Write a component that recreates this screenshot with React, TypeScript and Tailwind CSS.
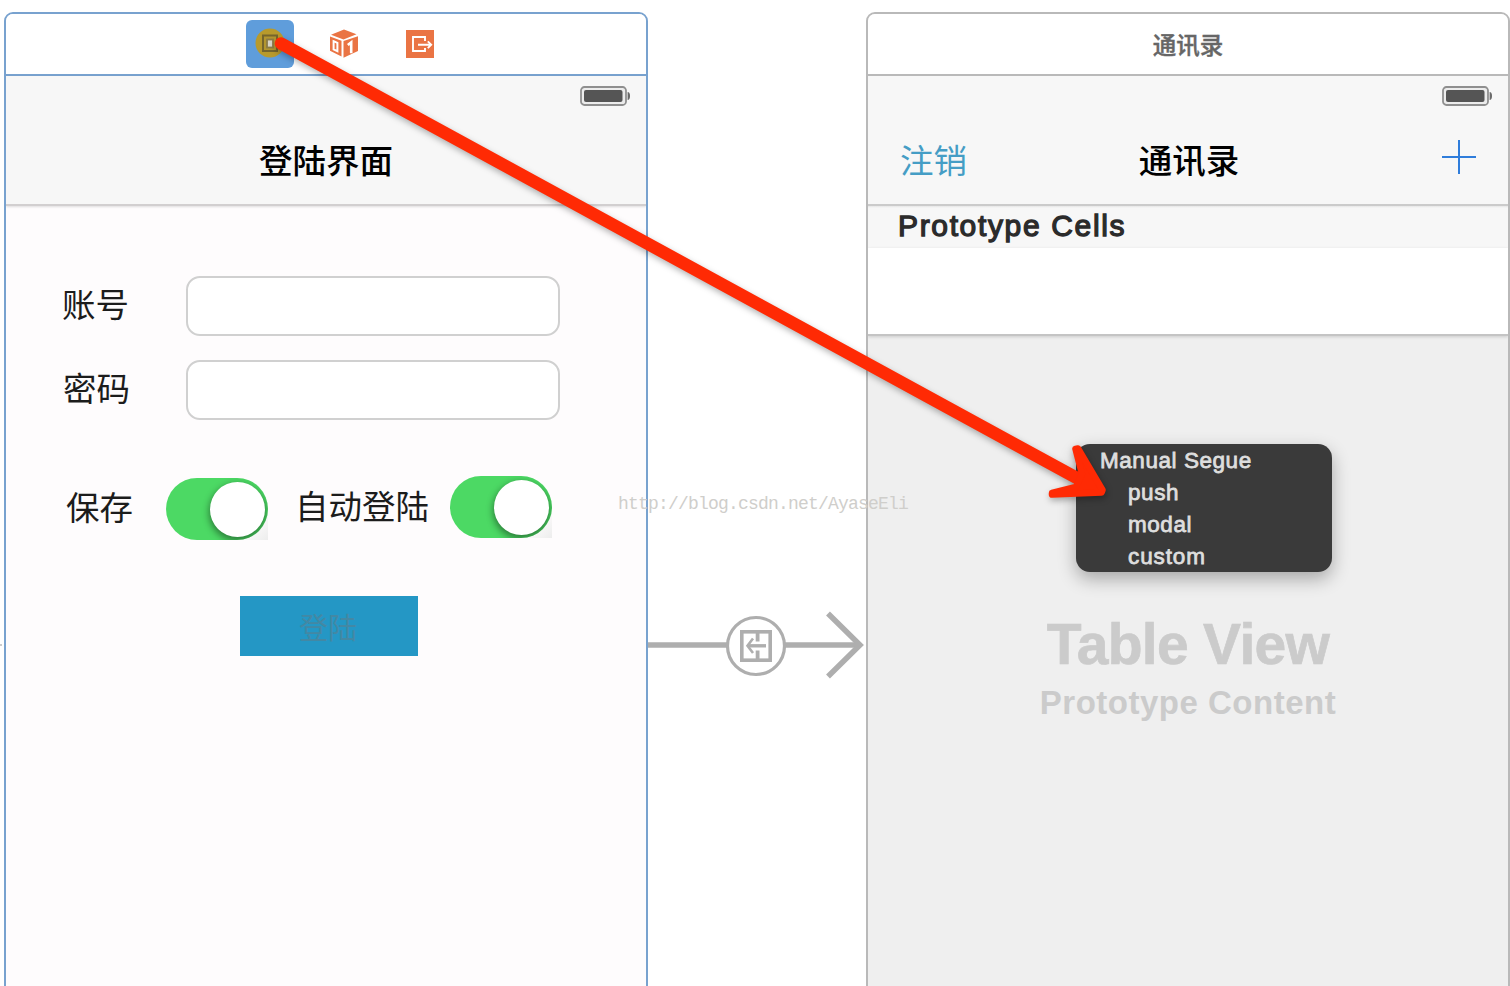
import React from "react";

const cjk = "font-['Noto_Sans_CJK_SC',sans-serif]";
const latin = "font-['Liberation_Sans',Arial,sans-serif]";

function Battery() {
  return (
    <svg width="50" height="20" viewBox="0 0 50 20" className="block">
      <rect x="1" y="1" width="45" height="18" rx="3.5" fill="#ececec" stroke="#8f8f8f" strokeWidth="1.8" />
      <rect x="4" y="4" width="38.5" height="12" rx="2" fill="#555555" />
      <path d="M47.600 6 Q50 6.200 50 10 Q50 13.800 47.600 14Z" fill="#6a6a6a" />
    </svg>
  );
}

function Toggle() {
  return (
    <div className="flex h-[62px] w-[102px] items-center justify-end bg-[linear-gradient(135deg,transparent_80%,#ededed_100%)]">
      <div className="flex h-[62px] w-[102px] items-center justify-end overflow-hidden rounded-full bg-[#4cd964] pr-[3px]">
        <div className="h-[55px] w-[55px] rounded-full bg-white shadow-[0_3px_7px_1px_rgba(0,0,0,0.42)]" />
      </div>
    </div>
  );
}

function ControllerIcon() {
  return (
    <svg width="48" height="48" viewBox="0 0 48 48" className="block">
      <rect width="48" height="48" rx="6" fill="#5f9ddb" />
      <circle cx="24" cy="23" r="14.500" fill="#b89a2c" />
      <rect x="17" y="15.500" width="14" height="15.500" fill="#b3962f" stroke="#75652c" strokeWidth="2" />
      <rect x="21" y="19.500" width="6" height="8" fill="#d9d5c8" stroke="#8b7b45" strokeWidth="1.8" />
    </svg>
  );
}

function ResponderIcon() {
  return (
    <svg width="30" height="30" viewBox="0 0 30 30" className="block">
      <path d="M15 .500 27.500 5.200 14.500 10.400 2 5.800Z" fill="#ea7444" />
      <path d="M1 7.500 12.500 11.800V27.500L1 21.800Z" fill="#ea7444" />
      <path d="M14.500 12 29 7.200V22L14.500 28.800Z" fill="#ea7444" />
      <path d="M4.600 12.200 8.400 13.800V22.200L4.600 20.400Z" fill="none" stroke="#fff" strokeWidth="2" />
      <path d="M18.800 16 22.200 13.400V24.200" fill="none" stroke="#fff" strokeWidth="2.600" />
    </svg>
  );
}

function ExitIcon() {
  return (
    <svg width="28" height="28" viewBox="0 0 28 28" className="block">
      <rect width="28" height="28" fill="#ea7444" />
      <path d="M19 11V7H7V21H19V18M12 14.700H25M21.800 11.300 25.200 14.700 21.800 18.100" fill="none" stroke="#fff" strokeWidth="1.900" />
    </svg>
  );
}

function SegueConnector() {
  return (
    <svg width="218" height="72" viewBox="0 0 218 72" className="block" fill="none" stroke="#aeaeae">
      <path d="M0 36H79M137 36H212" strokeWidth="5.5" />
      <path d="M180 4.500 212 36 180 67.500" strokeWidth="5.5" />
      <circle cx="108" cy="37" r="28.500" strokeWidth="3.2" />
      <rect x="93.800" y="22.800" width="28.400" height="28.400" strokeWidth="3.6" />
      <path d="M109.600 23V32.600M109.600 41.500V51" strokeWidth="3.8" />
      <path d="M118 36.800H100" strokeWidth="3.400" />
      <path d="M105 29.500 99.500 36.800 105 44" strokeWidth="2.600" />
    </svg>
  );
}

function Field({ label, shift }: { label: string; shift: string }) {
  return (
    <div className="flex h-[60px] items-start">
      <span className={`${cjk} ${shift} w-[124px] text-[33.5px] leading-[54px] text-[#1c1c1c]`}>{label}</span>
      <input
        aria-label={label}
        className="h-[60px] w-[374px] rounded-[14px] border-2 border-[#d0d0d0] bg-white px-3 outline-none"
      />
    </div>
  );
}

function LoginScene() {
  return (
    <section className="flex h-[990px] w-[644px] shrink-0 flex-col overflow-hidden rounded-t-[9px] border-2 border-[#78a2cf] bg-[#fefcfd]">
      <header className="flex h-[62px] shrink-0 items-center border-b-2 border-[#78a2cf] bg-white pl-[240px]">
        <ControllerIcon />
        <div className="ml-[35px]"><ResponderIcon /></div>
        <div className="ml-[47px]"><ExitIcon /></div>
      </header>
      <nav className="flex h-[130px] shrink-0 flex-col border-b-2 border-[#d2cfd0] bg-[#f7f7f7] shadow-[0_1px_2px_rgba(0,0,0,0.12)]">
        <div className="flex justify-end pt-[10px] pr-4"><Battery /></div>
        <h1 className={`${cjk} mt-[28px] text-center text-[33.5px] leading-[50px] font-medium text-black`}>登陆界面</h1>
      </nav>
      <div className="flex flex-col gap-6 pt-[70px] pl-14">
        <Field label="账号" shift="" />
        <Field label="密码" shift="pl-px" />
      </div>
      <div className="mt-14 flex items-start pl-[60px]">
        <span className={`${cjk} w-[100px] text-[33.5px] leading-[60px] text-[#1c1c1c]`}>保存</span>
        <div className="mt-[2px]"><Toggle /></div>
        <span className={`${cjk} ml-[27px] w-[155px] text-[33.5px] leading-[57px] whitespace-nowrap text-[#1c1c1c]`}>自动登陆</span>
        <Toggle />
      </div>
      <button className={`${cjk} mt-[56px] ml-[234px] h-[60px] w-[178px] bg-[#2497c5] pr-[2px] text-[29px] leading-[58px] text-[#4388a4]`}>
        登陆
      </button>
    </section>
  );
}

function ContactsScene() {
  return (
    <section className="flex h-[990px] w-[644px] shrink-0 flex-col overflow-hidden rounded-t-[9px] border-2 border-[#b9b9b9] bg-[#efefef]">
      <header className={`${cjk} h-[62px] shrink-0 border-b-2 border-[#b9b9b9] bg-white text-center text-[23.5px] leading-[60px] font-medium text-[#666] [-webkit-text-stroke:0.4px_#666]`}>
        通讯录
      </header>
      <nav className="h-[130px] shrink-0 border-b-2 border-[#cbcbcb] bg-[#f7f7f7]">
        <div className="flex justify-end pt-[10px] pr-4"><Battery /></div>
        <div className="mt-[28px] grid grid-cols-3 items-start pr-8 pl-8">
          <span className={`${cjk} text-[33.5px] leading-[49px] text-[#459dc5]`}>注销</span>
          <h1 className={`${cjk} pl-[2px] text-center text-[33.5px] leading-[50px] font-medium text-black`}>通讯录</h1>
          <svg width="34" height="34" viewBox="0 0 34 34" className="mt-[6px] justify-self-end" stroke="#2f7ddb" strokeWidth="2">
            <path d="M17 0V34M0 17H34" />
          </svg>
        </div>
      </nav>
      <div className={`${latin} h-[42px] shrink-0 bg-[#f7f7f7] pl-[30px] text-[30px] leading-[40px] text-[#2b2b2b]`}>
        <div className="-ml-[30px] h-[2px] bg-gradient-to-b from-[#e6e6e6] to-[#f7f7f7]" />
        <div className="-mt-[2px] tracking-[1.65px] [-webkit-text-stroke:1.3px_#2b2b2b]">Prototype Cells</div>
      </div>
      <div className="h-[88px] shrink-0 border-b-2 border-[#c4c4c4] bg-white shadow-[0_1px_3px_rgba(0,0,0,0.15)]" />
      <div className={`${latin} mt-[276px] flex flex-col items-center font-bold text-[#cbcbcb]`}>
        <div className="text-[57px] leading-[64px] tracking-[-0.7px] [-webkit-text-stroke:0.7px_#cbcbcb]">Table View</div>
        <div className="mt-[7px] text-[33px] leading-[40px] tracking-[0.5px]">Prototype Content</div>
      </div>
    </section>
  );
}

function SegueMenu() {
  return (
    <div className={`${latin} absolute top-[444px] left-[1076px] h-32 w-64 rounded-[14px] bg-[#3a3a3a] pt-px pl-6 text-[22.5px] leading-8 tracking-[0.55px] text-[#dedede] shadow-[0_7px_18px_rgba(0,0,0,0.3)] [-webkit-text-stroke:0.8px_#dedede]`}>
      <div className="h-8">Manual Segue</div>
      <ul className="pl-7">
        <li className="h-8">push</li>
        <li className="h-8">modal</li>
        <li className="h-8 tracking-[0.9px]">custom</li>
      </ul>
    </div>
  );
}

function DragArrow() {
  return (
    <svg width="1510" height="986" viewBox="0 0 1510 986" className="pointer-events-none absolute top-0 left-0 drop-shadow-[1px_3px_3px_rgba(0,0,0,0.3)]">
      <path d="M281 43.500 1086 483" stroke="#ff2a04" strokeWidth="12.500" strokeLinecap="round" />
      <path
        d="M1075.500 449 1078 448.500 1102.500 490 1101.500 492.500 1052 494.500 1052 493 1076 487 1082 474Z"
        fill="#ff2a04"
        stroke="#ff2a04"
        strokeWidth="6.500"
        strokeLinejoin="round"
      />
    </svg>
  );
}

export default function App() {
  return (
    <main className="relative h-[986px] w-[1510px] overflow-hidden bg-white">
      <div className="flex items-start pt-3">
        <div className="mt-[632px] h-[2px] w-1 shrink-0 bg-gradient-to-r from-[#cccccc] from-50% to-white to-50%" />
        <LoginScene />
        <div className="mt-[597px] w-[218px] shrink-0"><SegueConnector /></div>
        <ContactsScene />
      </div>
      <SegueMenu />
      <div className="absolute top-[492px] left-[618px] font-['Liberation_Mono',monospace] text-[18px] leading-6 tracking-[-0.8px] whitespace-nowrap text-[#cfcecb]">
        http://blog.csdn.net/AyaseEli
      </div>
      <DragArrow />
    </main>
  );
}
